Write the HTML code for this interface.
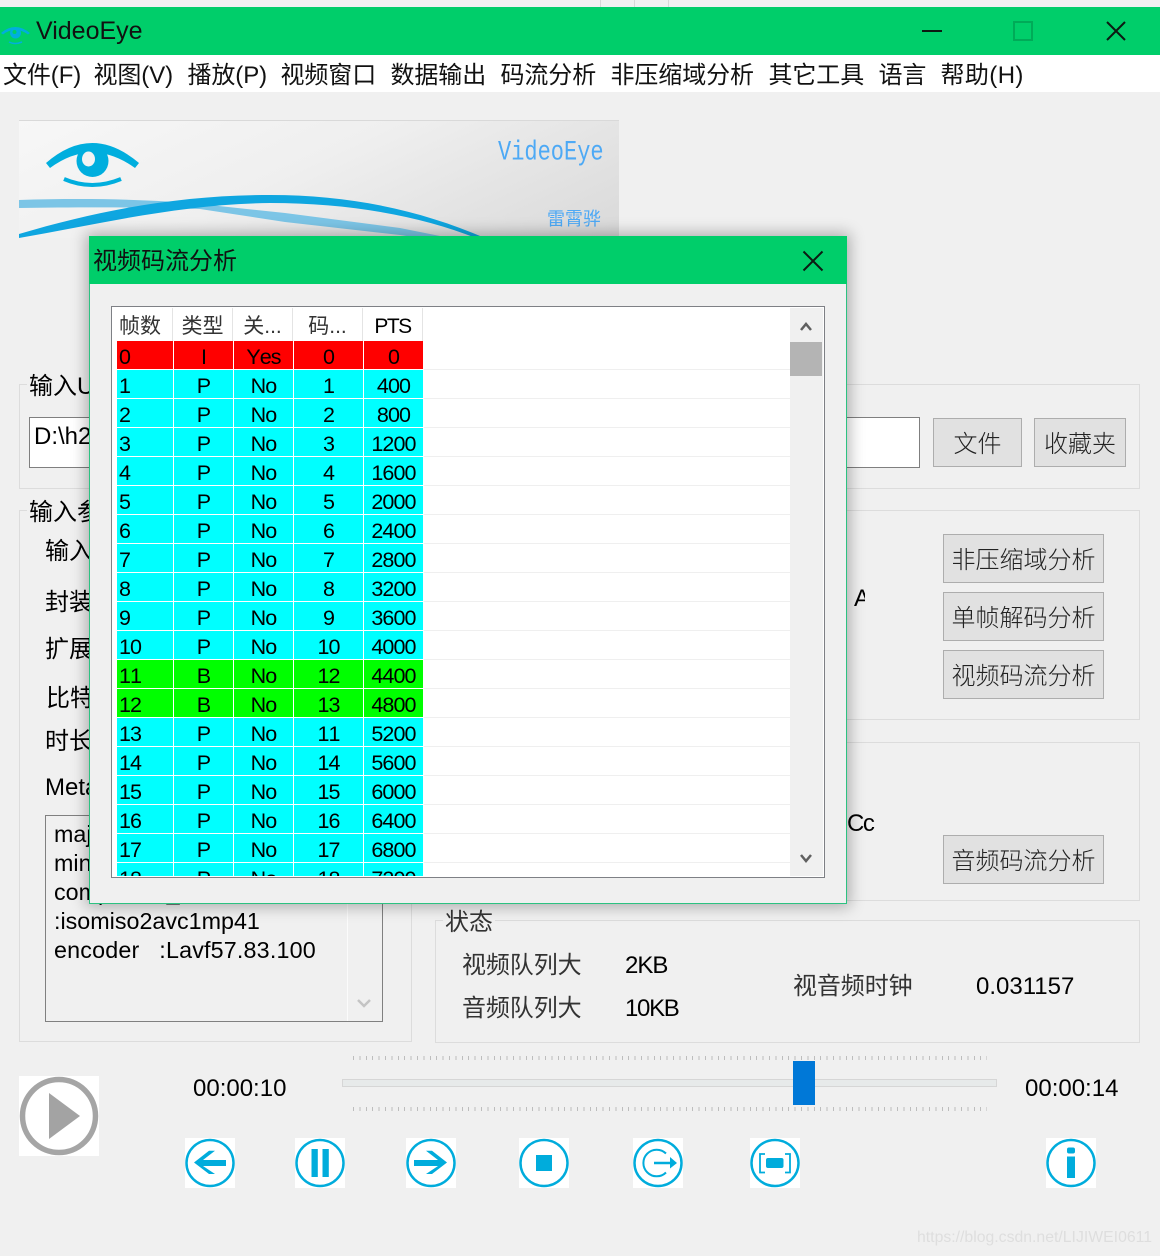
<!DOCTYPE html>
<html><head><meta charset="utf-8"><style>
*{box-sizing:border-box}
html,body{margin:0;padding:0}
body{width:1160px;height:1256px;overflow:hidden;position:relative;background:#f0f0f0;font-family:"Liberation Sans","Noto Sans CJK SC",sans-serif;color:#000}
.a{position:absolute}
.t{position:absolute;white-space:pre;line-height:30px;font-size:24px;height:30px;margin-top:2px}
.g{position:absolute;border:1px solid #dcdcdc}
.lb{background:#f0f0f0;padding:0 2px}
.b{position:absolute;background:#e1e1e1;border:1px solid #adadad;font-size:24px;line-height:51px;text-align:center;color:#222;font-weight:300;white-space:pre}
.menu span{position:absolute;top:6px;font-size:24px;line-height:30px;white-space:pre;color:#111;letter-spacing:-.1px}
table{border-collapse:separate;border-spacing:0;table-layout:fixed;width:307px;position:absolute;left:0;top:0}
td{height:29px;padding:4px 0 0;font-size:21.5px;letter-spacing:-.9px;font-kerning:none;line-height:24px;text-align:center;border-right:1px solid #fff;border-bottom:1px solid #fff;background:#0ff;overflow:hidden}
td:first-child{text-align:left;padding-left:2px}
tr.i td{background:#f00}
tr.n td{background:#0f0}
.h{position:absolute;top:308px;height:33px;font-size:21px;line-height:37px;text-align:center;border-right:1px solid #e4e4e4;color:#333;background:#fff}
</style></head><body>

<div class="a" style="left:0;top:0;width:1160px;height:7px;background:#f1f1f1"></div>
<div class="a" style="left:600px;top:0;width:1px;height:7px;background:#d8d8d8"></div>
<div class="a" style="left:634px;top:0;width:1px;height:7px;background:#d8d8d8"></div>
<div class="a" style="left:668px;top:0;width:1px;height:7px;background:#d8d8d8"></div>

<!-- main title -->
<div class="a" style="left:0;top:7px;width:1160px;height:48px;background:#00ce6a"></div>
<svg class="a" style="left:0;top:22px" width="32" height="28" viewBox="0 0 32 28"><path d="M1 11Q15 -1 30 11L28 12.5Q15 3 3 12.5Z" fill="#00aede"/><circle cx="15.500" cy="11" r="5.500" fill="#00aede"/><circle cx="14.500" cy="10" r="2" fill="#00ce6a"/><path d="M9 20Q15 23 22 20" stroke="#00aede" stroke-width="1.500" fill="none"/></svg>
<div class="t" style="left:36px;top:16px;margin-top:0;font-size:25px;color:#111">VideoEye</div>
<svg class="a" style="left:900px;top:7px" width="260" height="48" viewBox="0 7 260 48">
<path d="M22 31H42" stroke="#0c1a12" stroke-width="2"/>
<rect x="114" y="22" width="18" height="18" fill="none" stroke="#00ab58" stroke-width="2"/>
<path d="M207 22L225 40M225 22L207 40" stroke="#0c1a12" stroke-width="2"/>
</svg>

<!-- menu -->
<div class="a menu" style="left:0;top:55px;width:1160px;height:37px;background:#fff">
<span style="left:3px">文件(F)</span><span style="left:93.500px">视图(V)</span><span style="left:187.500px">播放(P)</span><span style="left:280.500px">视频窗口</span><span style="left:390.500px">数据输出</span><span style="left:500.500px">码流分析</span><span style="left:610.500px">非压缩域分析</span><span style="left:768.500px">其它工具</span><span style="left:878.500px">语言</span><span style="left:940.500px;letter-spacing:.4px">帮助(H)</span>
</div>

<!-- banner -->
<div class="a" style="left:19px;top:120px;width:600px;height:118px;background:linear-gradient(155deg,#f7f7f7 0%,#efefef 45%,#d9d9d9 100%);border-top:1px solid #d9d9d9"></div>
<svg class="a" style="left:19px;top:120px" width="600" height="118" viewBox="19 120 600 118">
<path d="M19 200C80 198 150 199 200 204L285 213L400 228L450 238L420 238L400 235L285 222L200 209C150 207 80 207 19 208Z" fill="#7cc5e6"/>
<path d="M19 234C100 210 180 195 270 195C350 195 420 210 485 238L476 238C420 216 350 203 270 203C180 204 100 224 19 238Z" fill="#0fa6e0"/>
<path d="M46 163Q92 123 139 163L135 168Q92 137 50 168Z" fill="#00aede"/>
<circle cx="92.500" cy="161" r="16" fill="#00aede"/>
<ellipse cx="88.500" cy="159" rx="6.500" ry="7.500" fill="#f3f3f3"/>
<path d="M64 179Q92 191 121 179" stroke="#00aede" stroke-width="4" fill="none"/>
</svg>
<div class="t" style="left:498px;top:136px;font-family:'Liberation Mono',monospace;font-size:22px;color:#4da9f5;transform:scaleY(1.25);transform-origin:left center">VideoEye</div>
<div class="t" style="left:547px;top:204px;margin-top:0;font-size:18px;color:#4da9f5">雷霄骅</div>

<!-- group boxes -->
<div class="g" style="left:19px;top:384px;width:1121px;height:105px"></div>
<div class="t lb" style="left:27px;top:371px;margin-top:1px">输入URL</div>
<div class="a" style="left:29px;top:417px;width:891px;height:51px;background:#fff;border:1px solid #7f7f7f"></div>
<div class="t" style="left:34px;top:421px;margin-top:1px">D:\h264.mp4</div>
<div class="b" style="left:933px;top:418px;width:89px;height:49px">文件</div>
<div class="b" style="left:1034px;top:418px;width:92px;height:49px">收藏夹</div>

<div class="g" style="left:19px;top:510px;width:393px;height:532px"></div>
<div class="t lb" style="left:27px;top:496px">输入参数</div>
<div class="t" style="left:45px;top:536px;margin-top:1px">输入</div>
<div class="t" style="left:45px;top:586px">封装</div>
<div class="t" style="left:45px;top:634px;margin-top:1px">扩展</div>
<div class="t" style="left:46px;top:682px">比特</div>
<div class="t" style="left:45px;top:725px">时长</div>
<div class="t" style="left:45px;top:772px;margin-top:1px">Metadata</div>
<div class="a" style="left:45px;top:815px;width:338px;height:207px;border:1px solid #808080;background:#f0f0f0"></div>
<div class="a" style="left:347px;top:816px;width:1px;height:205px;background:#fbfbfb"></div>
<svg class="a" style="left:357px;top:998px" width="14" height="12" viewBox="0 0 14 12"><path d="M1 2L7 8L13 2" stroke="#c4c4c4" stroke-width="2.500" fill="none"/></svg>
<div class="t" style="left:54px;top:819px;margin-top:0;font-size:23.300px">major_brand</div>
<div class="t" style="left:54px;top:848px;margin-top:0;font-size:23.300px">minor_version</div>
<div class="t" style="left:54px;top:877px;margin-top:0;font-size:23.300px">compatible_brands</div>
<div class="t" style="left:54px;top:906px;margin-top:0;font-size:23.300px">:isomiso2avc1mp41</div>
<div class="t" style="left:54px;top:935px;margin-top:0;font-size:23.300px;letter-spacing:.17px">encoder   :Lavf57.83.100</div>

<div class="g" style="left:435px;top:510px;width:705px;height:210px"></div>
<div class="t" style="left:854px;top:583px;margin-top:1px;width:11px;overflow:hidden">A</div>
<div class="b" style="left:943px;top:534px;width:161px;height:49px">非压缩域分析</div>
<div class="b" style="left:943px;top:592px;width:161px;height:49px">单帧解码分析</div>
<div class="b" style="left:943px;top:650px;width:161px;height:49px">视频码流分析</div>

<div class="g" style="left:435px;top:742px;width:705px;height:159px"></div>
<div class="t" style="left:847px;top:809px;margin-top:0;letter-spacing:-1.500px">Cc</div>
<div class="b" style="left:943px;top:835px;width:161px;height:49px">音频码流分析</div>

<div class="g" style="left:435px;top:920px;width:705px;height:123px"></div>
<div class="t lb" style="left:443px;top:906px;color:#333">状态</div>
<div class="t" style="left:462px;top:950px;margin-top:1px;color:#333;letter-spacing:-.1px">视频队列大</div>
<div class="t" style="left:625px;top:950px;margin-top:1px;letter-spacing:-1px">2KB</div>
<div class="t" style="left:462px;top:993px;color:#333;margin-top:1px;letter-spacing:-.1px">音频队列大</div>
<div class="t" style="left:625px;top:993px;margin-top:1px;letter-spacing:-1.300px">10KB</div>
<div class="t" style="left:793px;top:971px;margin-top:1px;color:#333;letter-spacing:-.1px">视音频时钟</div>
<div class="t" style="left:976px;top:971px;margin-top:1px">0.031157</div>

<!-- slider -->
<div class="a" style="left:353px;top:1056px;width:634px;height:4px;background:repeating-linear-gradient(90deg,#bdbdbd 0,#bdbdbd 1px,transparent 1px,transparent 6.400px)"></div>
<div class="a" style="left:353px;top:1107px;width:634px;height:4px;background:repeating-linear-gradient(90deg,#bdbdbd 0,#bdbdbd 1px,transparent 1px,transparent 6.400px)"></div>
<div class="a" style="left:342px;top:1079px;width:655px;height:8px;background:#e7eaea;border:1px solid #d6d6d6"></div>
<div class="a" style="left:793px;top:1061px;width:22px;height:44px;background:#0078d7"></div>
<div class="t" style="left:193px;top:1073px;margin-top:1px">00:00:10</div>
<div class="t" style="left:1025px;top:1073px;margin-top:1px">00:00:14</div>

<!-- play -->
<svg class="a" style="left:19px;top:1076px" width="80" height="80" viewBox="0 0 80 80"><rect width="80" height="80" fill="#fff"/><circle cx="40" cy="40" r="36.500" fill="#fff" stroke="#a5a5a5" stroke-width="5.500"/><path d="M30 17L61 40L30 63Z" fill="#a3a3a3"/></svg>

<!-- control icons -->
<svg class="a" style="left:185px;top:1138px" width="50" height="50" viewBox="0 0 50 50"><rect width="50" height="50" fill="#fff"/><ellipse cx="25" cy="25" rx="23.500" ry="23" fill="none" stroke="#00acdc" stroke-width="2.500"/><path d="M9 24.500L24 12.700H30L18 22H41V28H18L30 36H24Z" fill="#00acdc"/></svg>
<svg class="a" style="left:295px;top:1138px" width="50" height="50" viewBox="0 0 50 50"><rect width="50" height="50" fill="#fff"/><ellipse cx="25" cy="25" rx="23.500" ry="23" fill="none" stroke="#00acdc" stroke-width="2.500"/><rect x="16.500" y="11" width="6.300" height="28" fill="#00acdc"/><rect x="27.500" y="11" width="6.300" height="28" fill="#00acdc"/></svg>
<svg class="a" style="left:406px;top:1138px" width="50" height="50" viewBox="0 0 50 50"><rect width="50" height="50" fill="#fff"/><ellipse cx="25" cy="25" rx="23.500" ry="23" fill="none" stroke="#00acdc" stroke-width="2.500"/><path d="M41 24.500L26 12.700H20L32 22H8V28H32L20 36H26Z" fill="#00acdc"/></svg>
<svg class="a" style="left:519px;top:1138px" width="50" height="50" viewBox="0 0 50 50"><rect width="50" height="50" fill="#fff"/><ellipse cx="25" cy="25" rx="23.500" ry="23" fill="none" stroke="#00acdc" stroke-width="2.500"/><rect x="17" y="17" width="16" height="16" fill="#00acdc"/></svg>
<svg class="a" style="left:633px;top:1138px" width="50" height="50" viewBox="0 0 50 50"><rect width="50" height="50" fill="#fff"/><ellipse cx="25" cy="25" rx="23.500" ry="23" fill="none" stroke="#00acdc" stroke-width="2.500"/><path d="M33 15.500A13.300 13.300 0 1 0 33 34.500" fill="none" stroke="#00acdc" stroke-width="2"/><path d="M21 23.700H37V19L44 25L37 30.500V26.300H21Z" fill="#00acdc"/></svg>
<svg class="a" style="left:750px;top:1138px" width="50" height="50" viewBox="0 0 50 50"><rect width="50" height="50" fill="#fff"/><ellipse cx="25" cy="25" rx="23.500" ry="23" fill="none" stroke="#00acdc" stroke-width="2.500"/><path d="M15 16H10V34.500H15M35 16H40V34.500H35" fill="none" stroke="#00acdc" stroke-width="1.800"/><rect x="16" y="20" width="17.500" height="10" rx="2" fill="#00acdc"/></svg>
<svg class="a" style="left:1046px;top:1138px" width="50" height="50" viewBox="0 0 50 50"><rect width="50" height="50" fill="#fff"/><ellipse cx="25" cy="25" rx="23.500" ry="23" fill="none" stroke="#00acdc" stroke-width="2.500"/><rect x="21" y="9.500" width="8" height="6" rx="2" fill="#00acdc"/><rect x="21" y="18.500" width="8" height="21.500" fill="#00acdc"/></svg>

<div class="t" style="left:917px;top:1226px;margin-top:0;font-size:15.800px;line-height:24px;color:#dedede">https://blog.csdn.net/LIJIWEI0611</div>

<!-- dialog -->
<div class="a" style="left:89px;top:236px;width:758px;height:668px;background:#f0f0f0;border:1px solid #2cc281;box-shadow:0 0 14px 3px rgba(0,0,0,.28)"></div>
<div class="a" style="left:89px;top:236px;width:758px;height:48px;background:#00ce6a"></div>
<div class="t" style="left:93px;top:246px;margin-top:1px;color:#111">视频码流分析</div>
<svg class="a" style="left:800px;top:248px" width="26" height="26" viewBox="0 0 26 26"><path d="M3.500 3.500L22.500 22.500M22.500 3.500L3.500 22.500" stroke="#0c1a12" stroke-width="2"/></svg>

<div class="a" style="left:111px;top:306px;width:714px;height:572px;background:#fff;border:1px solid #7e8085"></div>
<div class="h" style="left:113px;width:60px;padding-right:5px">帧数</div>
<div class="h" style="left:173px;width:60px">类型</div>
<div class="h" style="left:233px;width:60px">关...</div>
<div class="h" style="left:293px;width:70px">码...</div>
<div class="h" style="left:363px;width:60px;color:#000;letter-spacing:-1.500px">PTS</div>

<div class="a" style="left:117px;top:341px;width:673px;height:535px;overflow:hidden;background:repeating-linear-gradient(180deg,#fff 0,#fff 28px,#efefef 28px,#efefef 29px)">
<table><colgroup><col style="width:57px"><col style="width:60px"><col style="width:60px"><col style="width:70px"><col style="width:60px"></colgroup>
<tr class="i"><td>0</td><td>I</td><td>Yes</td><td>0</td><td>0</td></tr>
<tr><td>1</td><td>P</td><td>No</td><td>1</td><td>400</td></tr>
<tr><td>2</td><td>P</td><td>No</td><td>2</td><td>800</td></tr>
<tr><td>3</td><td>P</td><td>No</td><td>3</td><td>1200</td></tr>
<tr><td>4</td><td>P</td><td>No</td><td>4</td><td>1600</td></tr>
<tr><td>5</td><td>P</td><td>No</td><td>5</td><td>2000</td></tr>
<tr><td>6</td><td>P</td><td>No</td><td>6</td><td>2400</td></tr>
<tr><td>7</td><td>P</td><td>No</td><td>7</td><td>2800</td></tr>
<tr><td>8</td><td>P</td><td>No</td><td>8</td><td>3200</td></tr>
<tr><td>9</td><td>P</td><td>No</td><td>9</td><td>3600</td></tr>
<tr><td>10</td><td>P</td><td>No</td><td>10</td><td>4000</td></tr>
<tr class="n"><td>11</td><td>B</td><td>No</td><td>12</td><td>4400</td></tr>
<tr class="n"><td>12</td><td>B</td><td>No</td><td>13</td><td>4800</td></tr>
<tr><td>13</td><td>P</td><td>No</td><td>11</td><td>5200</td></tr>
<tr><td>14</td><td>P</td><td>No</td><td>14</td><td>5600</td></tr>
<tr><td>15</td><td>P</td><td>No</td><td>15</td><td>6000</td></tr>
<tr><td>16</td><td>P</td><td>No</td><td>16</td><td>6400</td></tr>
<tr><td>17</td><td>P</td><td>No</td><td>17</td><td>6800</td></tr>
<tr><td>18</td><td>P</td><td>No</td><td>18</td><td>7200</td></tr>
</table>
</div>

<!-- scrollbar -->
<div class="a" style="left:790px;top:308px;width:33px;height:568px;background:#f0f0f0"></div>
<div class="a" style="left:790px;top:342px;width:32px;height:34px;background:#b4b4b4"></div>
<svg class="a" style="left:799px;top:320px" width="14" height="12" viewBox="0 0 14 12"><path d="M2 10L7 4L12 10" stroke="#606060" stroke-width="2.500" fill="none"/></svg>
<svg class="a" style="left:799px;top:853px" width="14" height="12" viewBox="0 0 14 12"><path d="M2 2L7 8L12 2" stroke="#606060" stroke-width="2.500" fill="none"/></svg>

</body></html>
